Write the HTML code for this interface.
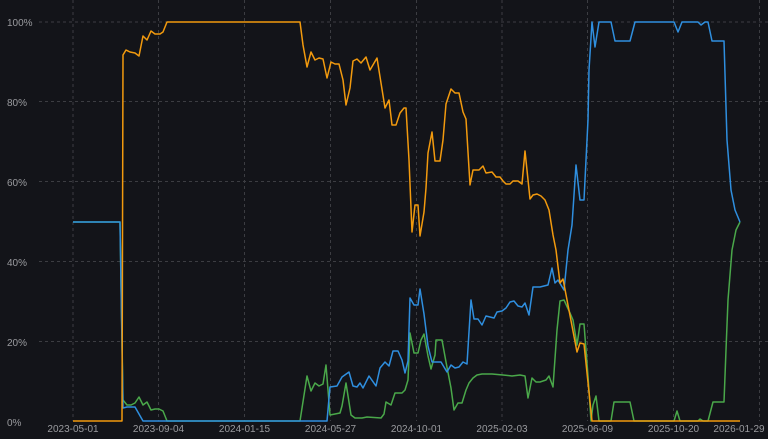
<!DOCTYPE html>
<html><head><meta charset="utf-8"><style>
html,body{margin:0;padding:0;background:#131419;}
svg{display:block}
text{font-family:"Liberation Sans",sans-serif;font-size:10px;fill:#9a9b9f}
</style></head><body>
<svg width="768" height="439" viewBox="0 0 768 439" xmlns="http://www.w3.org/2000/svg">
<rect width="768" height="439" fill="#131419"/>
<g stroke="#3c3d42" stroke-width="1" stroke-dasharray="3,3" fill="none">
<line x1="39" y1="22" x2="768" y2="22"/>
<line x1="39" y1="101.5" x2="768" y2="101.5"/>
<line x1="39" y1="181.5" x2="768" y2="181.5"/>
<line x1="39" y1="261.5" x2="768" y2="261.5"/>
<line x1="39" y1="341.5" x2="768" y2="341.5"/>
<line x1="73" y1="0" x2="73" y2="421"/>
<line x1="158.5" y1="0" x2="158.5" y2="421"/>
<line x1="244.5" y1="0" x2="244.5" y2="421"/>
<line x1="330.5" y1="0" x2="330.5" y2="421"/>
<line x1="416.5" y1="0" x2="416.5" y2="421"/>
<line x1="502" y1="0" x2="502" y2="421"/>
<line x1="587.5" y1="0" x2="587.5" y2="421"/>
<line x1="673.5" y1="0" x2="673.5" y2="421"/>
<line x1="759.5" y1="0" x2="759.5" y2="421"/>
</g>
<text x="7" y="26">100%</text>
<text x="7" y="106">80%</text>
<text x="7" y="186">60%</text>
<text x="7" y="266">40%</text>
<text x="7" y="346">20%</text>
<text x="7" y="426">0%</text>
<g text-anchor="middle">
<text x="73" y="432">2023-05-01</text>
<text x="158.5" y="432">2023-09-04</text>
<text x="244.5" y="432">2024-01-15</text>
<text x="330.5" y="432">2024-05-27</text>
<text x="416.5" y="432">2024-10-01</text>
<text x="502" y="432">2025-02-03</text>
<text x="587.5" y="432">2025-06-09</text>
<text x="673.5" y="432">2025-10-20</text>
<text x="739" y="432">2026-01-29</text>
</g>
<g fill="none" stroke-width="1.5" stroke-linejoin="round">
<polyline stroke="#4aa84a" points="73,222 120,222 123,400 127,405 131,405 135,403 139,397 143,405 147,402 151,410 155,409 159,409 163,411 167,421 300,421 307,376 311,391 315,383 319,386 323,384 326,365 330,415 340,413 342,406 346,383 351,415 355,418 362,418 367,417 381,418 384,414 386,402 391,405 395,393 399,393 402,393 405,390 408,380 410,333 414,353 418,353 421,340 424,334 428,356 431,369 435,355 436,340 442,340 446,362 451,388 454,410 458,403 462,403 466,390 469,383 473,378 477,375 482,374 492,374 503,375 512,376 520,375 525,376 528,398 532,378 536,382 540,382 546,380 549,376 553,387 557,330 560,301 564,300 570,313 573,320 577,345 580,324 584,324 588,376 591,421 593,405 596,396 599,421 611,421 614,402 630,402 634,421 674,421 677,411 680,421 698,421 700,419 703,421 708,421 713,402 724,402 726,350 728,300 732,250 736,230 740,222"/>
<polyline stroke="#2f8fdf" points="73,222 120,222 123,408 127,407 135,407 143,421 327,421 330,387 337,386 342,377 349,372 353,386 357,387 360,383 363,388 369,376 376,386 380,368 385,362 389,366 393,351 398,351 402,360 405,373 408,361 410,298 414,305 418,305 420,289 424,314 428,346 432,362 441,362 447,372 451,365 455,368 459,367 463,362 467,364 471,300 474,319 478,319 482,325 486,316 490,317 494,318 497,312 502,311 506,308 510,302 514,301 518,306 522,307 525,303 529,315 533,287 540,287 548,285 552,268 555,283 558,280 564,290 568,250 572,225 576,165 580,200 584,200 588,120 589,70 592,22 595,47 599,22 611,22 615,41 630,41 635,22 674,22 678,32 682,22 698,22 701,25 705,22 708,22 712,41 724,41 727,140 731,190 735,210 740,222"/>
<polyline stroke="#f29a0e" points="73,421 122,421 123,55 126,50 130,52 135,53 139,56 143,36 147,40 151,31 155,34 160,34 163,32 167,22 300,22 303,45 307,67 311,52 315,60 319,58 323,59 327,78 331,62 335,64 339,64 343,80 346,105 350,88 353,61 357,59 361,63 366,57 370,70 377,58 381,83 385,108 389,100 392,125 396,125 400,113 404,108 406,108 409,160 412,232 415,205 418,205 420,236 424,212 426,188 428,153 432,132 435,161 440,161 443,140 446,104 451,89 455,93 459,93 463,112 466,119 470,185 473,170 479,170 483,166 486,173 492,172 496,177 500,177 503,181 506,184 510,184 513,181 518,181 522,184 525,151 530,199 533,195 537,194 541,196 545,200 549,210 553,235 556,250 560,283 563,279 577,352 580,343 584,344 592,421 740,421"/>
</g>
</svg>
</body></html>
